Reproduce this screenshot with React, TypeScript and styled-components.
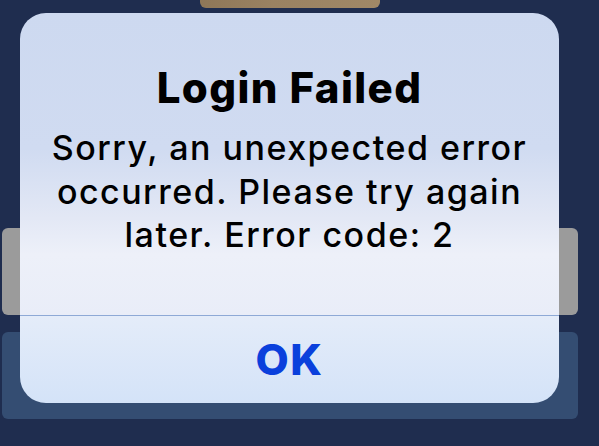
import React from "react"
import styled, { createGlobalStyle } from "styled-components"

const GlobalStyle = createGlobalStyle`
  html, body {
    margin: 0;
    padding: 0;
    background: #1f2d4f;
    font-family: Inter, "Noto Sans", sans-serif;
  }
`

const Screen = styled.div`
  position: relative;
  width: 599px;
  height: 446px;
  overflow: hidden;
  background: #1f2d4f;
  display: flex;
  flex-direction: column;
  padding: 0 21px 0 2px;
  box-sizing: border-box;
`

const Photo = styled.div`
  align-self: center;
  width: 180px;
  height: 8px;
  border-radius: 0 0 6px 6px;
  background: linear-gradient(90deg, #8f7758, #9a8262 40%, #a08867);
`

const Field = styled.div`
  margin-top: 220px;
  height: 87px;
  border-radius: 6px;
  background: #9b9b9b;
`

const SubmitButton = styled.div`
  margin-top: 17px;
  height: 87px;
  border-radius: 6px;
  background: #344d72;
`

const Alert = styled.div`
  position: absolute;
  left: 20px;
  top: 13px;
  width: 539px;
  height: 390px;
  border-radius: 26px;
  overflow: hidden;
  display: flex;
  flex-direction: column;
`

const Body = styled.div`
  height: 302px;
  box-sizing: border-box;
  padding: 51px 20px 0;
  text-align: center;
  background: linear-gradient(
    180deg,
    #cdd9f0 0%,
    #d0dbf1 45%,
    #e3e8f5 68%,
    #edf0f9 80%,
    #e9edf8 100%
  );
`

const Title = styled.h1`
  margin: 0;
  font-size: 42px;
  line-height: 48px;
  font-weight: 800;
  color: #000;
  letter-spacing: 1.4px;
`

const Message = styled.p`
  margin: 14px 0 0;
  font-size: 34px;
  line-height: 43.5px;
  font-weight: 500;
  color: #000;
  letter-spacing: 1.5px;
`

const Divider = styled.div`
  height: 1px;
  background: #8ea9d6;
`

const OkButton = styled.button`
  flex: 1;
  border: none;
  margin: 0;
  padding: 0 0 2px;
  font-family: Inter, "Noto Sans", sans-serif;
  font-size: 43px;
  font-weight: 800;
  letter-spacing: 1.5px;
  color: #0a40dc;
  background: linear-gradient(180deg, #e4ecf9 0%, #d4e3f8 100%);
`

const App = () => (
  <Screen>
    <GlobalStyle />
    <Photo />
    <Field />
    <SubmitButton />
    <Alert>
      <Body>
        <Title>Login Failed</Title>
        <Message>
          Sorry, an unexpected error occurred. Please try again later. Error
          code: 2
        </Message>
      </Body>
      <Divider />
      <OkButton>OK</OkButton>
    </Alert>
  </Screen>
)

export default App
